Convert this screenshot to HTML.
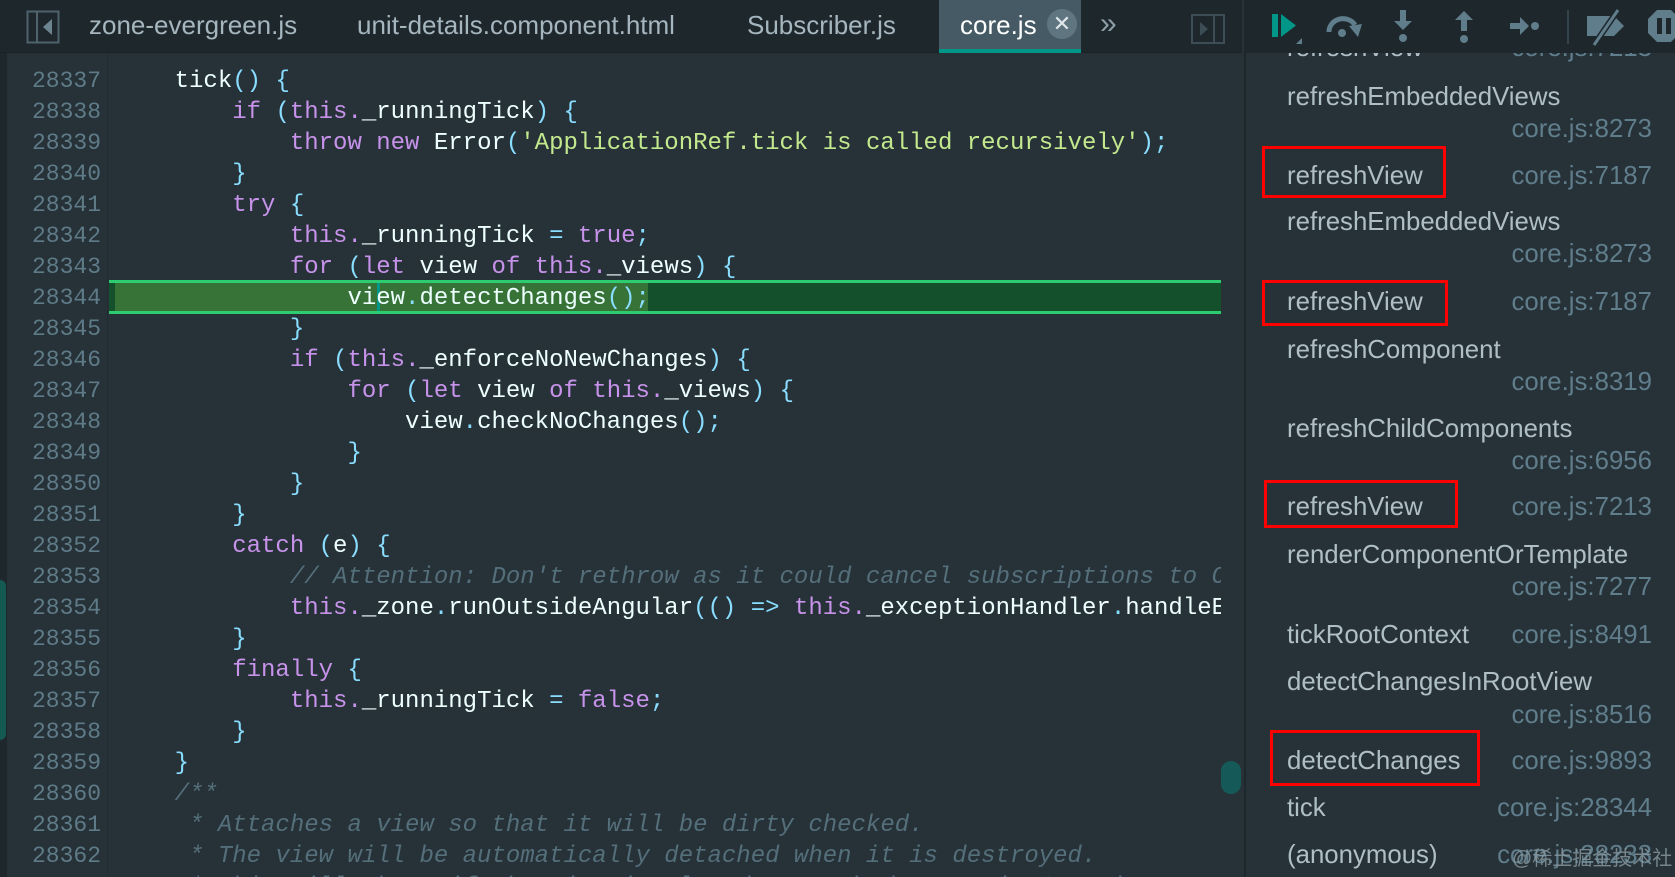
<!DOCTYPE html>
<html><head><meta charset="utf-8"><style>
*{margin:0;padding:0;box-sizing:border-box}
body{width:1675px;height:877px;overflow:hidden;background:#263238;position:relative;font-family:"Liberation Sans",sans-serif}
.abs{position:absolute}
#tabs{left:0;top:0;width:1242px;height:53px;background:#1e272c;border-bottom:1px solid #1a2226;z-index:5}
.tab{position:absolute;top:0;height:53px;line-height:50px;font-size:26px;color:#a6b6bf;white-space:nowrap}
#editor{left:0;top:53px;width:1242px;height:824px;overflow:hidden}
.ln{position:absolute;left:0;width:101px;text-align:right;font-family:"Liberation Mono",monospace;font-size:23px;color:#5f7b88;height:31px;line-height:31px}
.cl{position:absolute;left:117px;font-family:"Liberation Mono",monospace;font-size:24px;color:#eeffff;white-space:pre;height:31px;line-height:31px}
.k{color:#c792ea}.p{color:#89ddff}.s{color:#c3e88d}.c{color:#546e7a;font-style:italic}
#right{left:1244px;top:0;width:431px;height:877px;background:#263238;border-left:2px solid #1e272c;overflow:hidden}
#tool{left:0;top:0;width:431px;height:53px;background:#1e272c;z-index:3}
.fn{position:absolute;left:41px;font-size:25.8px;color:#b0bec5;height:32px;line-height:32px;white-space:nowrap}
.fl{position:absolute;right:23px;font-size:25.8px;color:#607d8b;height:32px;line-height:32px;white-space:nowrap}
.box{position:absolute;border:3px solid #ff0000}
</style></head><body>

<div id="editor" class="abs">
<div class="abs" style="left:0;top:0;width:7px;height:824px;background:#1e272c"></div>
<div class="abs" style="left:0;top:527px;width:6px;height:160px;background:#155a52;border-radius:0 6px 6px 0"></div>
<div class="abs" style="left:107px;top:0;width:1px;height:824px;background:#222c31"></div>
<div class="abs" style="left:109px;top:227px;width:1112px;height:34px;background:#15502c;border-top:3px solid #2ecc71;border-bottom:3px solid #2ecc71"></div>
<div class="abs" style="left:115px;top:230px;width:533px;height:28px;background:#377337"></div>
<div class="abs" style="left:377px;top:230px;width:3px;height:28px;background:#009688"></div>
<div class="abs" style="left:1221px;top:708px;width:20px;height:33px;background:#155a58;border-radius:10px"></div>
</div>

<div class="abs" style="left:0;top:3px;width:1221px;height:874px;overflow:hidden">
<div class="ln" style="top:17px">28336</div><div class="cl c" style="top:17px">     */</div>
<div class="ln" style="top:63px">28337</div><div class="cl" style="top:63px">    tick<span class="p">()</span> <span class="p">{</span></div>
<div class="ln" style="top:94px">28338</div><div class="cl" style="top:94px">        <span class="k">if</span> <span class="p">(</span><span class="k">this.</span>_runningTick<span class="p">)</span> <span class="p">{</span></div>
<div class="ln" style="top:125px">28339</div><div class="cl" style="top:125px">            <span class="k">throw new</span> Error<span class="p">(</span><span class="s">'ApplicationRef.tick is called recursively'</span><span class="p">);</span></div>
<div class="ln" style="top:156px">28340</div><div class="cl" style="top:156px">        <span class="p">}</span></div>
<div class="ln" style="top:187px">28341</div><div class="cl" style="top:187px">        <span class="k">try</span> <span class="p">{</span></div>
<div class="ln" style="top:218px">28342</div><div class="cl" style="top:218px">            <span class="k">this.</span>_runningTick <span class="p">=</span> <span class="k">true</span><span class="p">;</span></div>
<div class="ln" style="top:249px">28343</div><div class="cl" style="top:249px">            <span class="k">for</span> <span class="p">(</span><span class="k">let</span> view <span class="k">of this.</span>_views<span class="p">)</span> <span class="p">{</span></div>
<div class="ln" style="top:280px">28344</div><div class="cl" style="top:280px">                view<span class="p">.</span>detectChanges<span class="p">();</span></div>
<div class="ln" style="top:311px">28345</div><div class="cl" style="top:311px">            <span class="p">}</span></div>
<div class="ln" style="top:342px">28346</div><div class="cl" style="top:342px">            <span class="k">if</span> <span class="p">(</span><span class="k">this.</span>_enforceNoNewChanges<span class="p">)</span> <span class="p">{</span></div>
<div class="ln" style="top:373px">28347</div><div class="cl" style="top:373px">                <span class="k">for</span> <span class="p">(</span><span class="k">let</span> view <span class="k">of this.</span>_views<span class="p">)</span> <span class="p">{</span></div>
<div class="ln" style="top:404px">28348</div><div class="cl" style="top:404px">                    view<span class="p">.</span>checkNoChanges<span class="p">();</span></div>
<div class="ln" style="top:435px">28349</div><div class="cl" style="top:435px">                <span class="p">}</span></div>
<div class="ln" style="top:466px">28350</div><div class="cl" style="top:466px">            <span class="p">}</span></div>
<div class="ln" style="top:497px">28351</div><div class="cl" style="top:497px">        <span class="p">}</span></div>
<div class="ln" style="top:528px">28352</div><div class="cl" style="top:528px">        <span class="k">catch</span> <span class="p">(</span>e<span class="p">)</span> <span class="p">{</span></div>
<div class="ln" style="top:559px">28353</div><div class="cl c" style="top:559px">            // Attention: Don't rethrow as it could cancel subscriptions to O</div>
<div class="ln" style="top:590px">28354</div><div class="cl" style="top:590px">            <span class="k">this.</span>_zone<span class="p">.</span>runOutsideAngular<span class="p">(()</span> <span class="p">=&gt;</span> <span class="k">this.</span>_exceptionHandler<span class="p">.</span>handleError</div>
<div class="ln" style="top:621px">28355</div><div class="cl" style="top:621px">        <span class="p">}</span></div>
<div class="ln" style="top:652px">28356</div><div class="cl" style="top:652px">        <span class="k">finally</span> <span class="p">{</span></div>
<div class="ln" style="top:683px">28357</div><div class="cl" style="top:683px">            <span class="k">this.</span>_runningTick <span class="p">=</span> <span class="k">false</span><span class="p">;</span></div>
<div class="ln" style="top:714px">28358</div><div class="cl" style="top:714px">        <span class="p">}</span></div>
<div class="ln" style="top:745px">28359</div><div class="cl" style="top:745px">    <span class="p">}</span></div>
<div class="ln" style="top:776px">28360</div><div class="cl c" style="top:776px">    /**</div>
<div class="ln" style="top:807px">28361</div><div class="cl c" style="top:807px">     * Attaches a view so that it will be dirty checked.</div>
<div class="ln" style="top:838px">28362</div><div class="cl c" style="top:838px">     * The view will be automatically detached when it is destroyed.</div>
<div class="ln" style="top:869px">28363</div><div class="cl c" style="top:869px">     * This will throw if the view is already attached to a ViewContainer.</div>
</div>

<div id="tabs" class="abs">
<svg class="abs" style="left:26px;top:10px" width="34" height="34" viewBox="0 0 34 34"><rect x="1.5" y="1.5" width="31" height="31" fill="none" stroke="#4f636d" stroke-width="2"/><line x1="11" y1="2" x2="11" y2="32" stroke="#4f636d" stroke-width="2"/><path d="M26 9 L17 17 L26 25Z" fill="#6d8591"/></svg>
<div class="tab" style="left:89px">zone-evergreen.js</div>
<div class="tab" style="left:357px">unit-details.component.html</div>
<div class="tab" style="left:747px">Subscriber.js</div>
<div class="abs" style="left:939px;top:0;width:142px;height:53px;background:#455a64;border-bottom:4px solid #009688"></div>
<div class="tab" style="left:960px;color:#fff">core.js</div>
<div class="abs" style="left:1047px;top:9px;width:30px;height:30px;border-radius:50%;background:#5f7681;color:#e0e6e9;font-size:22px;line-height:30px;text-align:center">✕</div>
<div class="tab" style="left:1100px;color:#8c9ea6;font-size:30px;line-height:48px">»</div>
<svg class="abs" style="left:1191px;top:14px" width="34" height="30" viewBox="0 0 34 30"><rect x="1" y="1" width="32" height="28" fill="none" stroke="#3c4d55" stroke-width="2"/><line x1="23" y1="1" x2="23" y2="29" stroke="#3c4d55" stroke-width="2"/><path d="M9 8 L17 15 L9 22Z" fill="#3c4d55"/></svg>
</div>

<div id="right" class="abs">
<div id="tool" class="abs">
<svg class="abs" style="left:20px;top:10px" width="44" height="36" viewBox="0 0 44 36"><rect x="6" y="4" width="6" height="23" fill="#009688"/><path d="M15 4 L30 15.5 L15 27Z" fill="#009688"/><path d="M36 28 L36 34 L30 34Z" fill="#607d8b"/></svg>
<svg class="abs" style="left:78px;top:12px" width="42" height="30" viewBox="0 0 42 30"><path d="M5 20 A14 13 0 0 1 31 13" fill="none" stroke="#607d8b" stroke-width="5"/><path d="M25 14 L38 12 L34 25Z" fill="#607d8b"/><circle cx="18" cy="21" r="4" fill="#607d8b"/></svg>
<svg class="abs" style="left:145px;top:8px" width="24" height="38" viewBox="0 0 24 38"><rect x="9" y="2" width="6" height="12" fill="#607d8b"/><path d="M3 13 L21 13 L12 22Z" fill="#607d8b"/><circle cx="12" cy="30" r="4" fill="#607d8b"/></svg>
<svg class="abs" style="left:206px;top:8px" width="24" height="38" viewBox="0 0 24 38"><path d="M3 12 L21 12 L12 3Z" fill="#607d8b"/><rect x="9" y="11" width="6" height="12" fill="#607d8b"/><circle cx="12" cy="31" r="4" fill="#607d8b"/></svg>
<svg class="abs" style="left:262px;top:14px" width="34" height="24" viewBox="0 0 34 24"><rect x="2" y="9" width="11" height="6" fill="#607d8b"/><path d="M12 3 L21 12 L12 21Z" fill="#607d8b"/><circle cx="27" cy="12" r="4" fill="#607d8b"/></svg>
<div class="abs" style="left:321px;top:10px;width:2px;height:34px;background:#33434b"></div>
<svg class="abs" style="left:338px;top:8px" width="44" height="40" viewBox="0 0 44 40"><path d="M3 8 L30 8 L40 18 L30 28 L3 28Z" fill="#607d8b"/><line x1="10" y1="37" x2="34" y2="2" stroke="#1e272c" stroke-width="6"/><line x1="10" y1="37" x2="34" y2="2" stroke="#607d8b" stroke-width="3"/></svg>
<svg class="abs" style="left:400px;top:8px" width="36" height="36" viewBox="0 0 36 36"><path d="M11 2 L25 2 L34 11 L34 25 L25 34 L11 34 L2 25 L2 11Z" fill="#607d8b"/><rect x="11" y="10" width="5" height="16" fill="#1e272c"/><rect x="20" y="10" width="5" height="16" fill="#1e272c"/></svg>
</div>
<div class="fn" style="top:32px">refreshView</div><div class="fl" style="top:32px">core.js:7213</div>
<div class="fn" style="top:81px">refreshEmbeddedViews</div><div class="fl" style="top:113px">core.js:8273</div>
<div class="fn" style="top:160px">refreshView</div><div class="fl" style="top:160px">core.js:7187</div>
<div class="fn" style="top:206px">refreshEmbeddedViews</div><div class="fl" style="top:238px">core.js:8273</div>
<div class="fn" style="top:286px">refreshView</div><div class="fl" style="top:286px">core.js:7187</div>
<div class="fn" style="top:334px">refreshComponent</div><div class="fl" style="top:366px">core.js:8319</div>
<div class="fn" style="top:413px">refreshChildComponents</div><div class="fl" style="top:445px">core.js:6956</div>
<div class="fn" style="top:491px">refreshView</div><div class="fl" style="top:491px">core.js:7213</div>
<div class="fn" style="top:539px">renderComponentOrTemplate</div><div class="fl" style="top:571px">core.js:7277</div>
<div class="fn" style="top:619px">tickRootContext</div><div class="fl" style="top:619px">core.js:8491</div>
<div class="fn" style="top:666px">detectChangesInRootView</div><div class="fl" style="top:699px">core.js:8516</div>
<div class="fn" style="top:745px">detectChanges</div><div class="fl" style="top:745px">core.js:9893</div>
<div class="fn" style="top:792px">tick</div><div class="fl" style="top:792px">core.js:28344</div>
<div class="fn" style="top:839px">(anonymous)</div><div class="fl" style="top:839px">core.js:28233</div>
<div class="abs" style="left:266px;top:842px;font-family:'Liberation Sans','Noto Sans CJK SC',sans-serif;font-size:20px;color:#8a9aa2;opacity:.8">@稀土掘金技术社区</div>
<div class="box" style="left:16px;top:146px;width:184px;height:52px"></div>
<div class="box" style="left:16px;top:280px;width:186px;height:46px"></div>
<div class="box" style="left:18px;top:480px;width:194px;height:48px"></div>
<div class="box" style="left:24px;top:730px;width:210px;height:56px"></div>
</div>
</body></html>
